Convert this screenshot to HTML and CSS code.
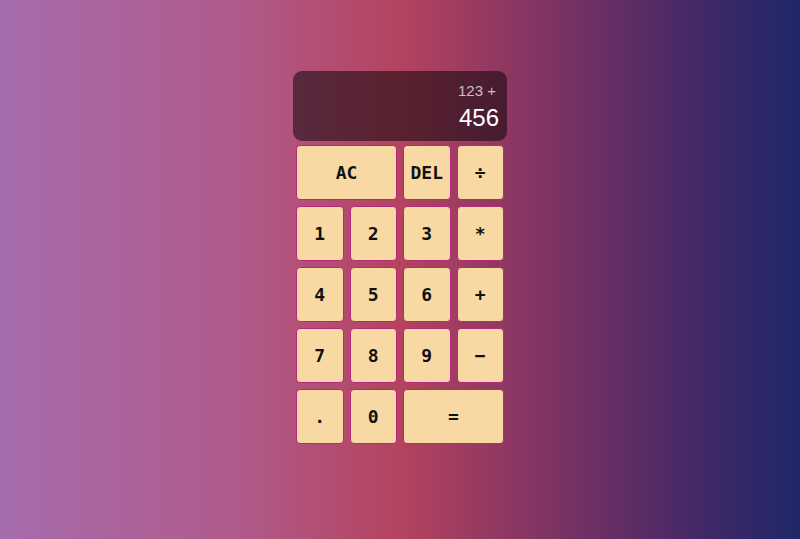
FILE: index.html
```html
<!DOCTYPE html>
<html>
<head>
<meta charset="utf-8">
<link rel="stylesheet" href="styles.css">
</head>
<body>
<div class="calc">
  <div class="display">
    <div class="prev">123 +</div>
    <div class="curr">456</div>
  </div>
  <div class="keys">
    <button class="key span2">AC</button>
    <button class="key">DEL</button>
    <button class="key">÷</button>
    <button class="key">1</button>
    <button class="key">2</button>
    <button class="key">3</button>
    <button class="key">*</button>
    <button class="key">4</button>
    <button class="key">5</button>
    <button class="key">6</button>
    <button class="key">+</button>
    <button class="key">7</button>
    <button class="key">8</button>
    <button class="key">9</button>
    <button class="key">−</button>
    <button class="key">.</button>
    <button class="key">0</button>
    <button class="key span2">=</button>
  </div>
</div>
</body>
</html>
```
FILE: styles.css
```css
html, body {
  margin: 0;
  height: 100%;
}
body {
  background: linear-gradient(to right, #a66cad 0%, #b05a8a 30%, #b4435f 50%, #7a3263 70%, #4a2966 85%, #1e2768 100%);
  font-family: "Liberation Sans", Arial, sans-serif;
  overflow: hidden;
}
.calc {
  width: 214px;
  margin: 71px auto 0;
}
.display {
  height: 70px;
  box-sizing: border-box;
  background: rgba(0, 0, 0, 0.5);
  border-radius: 9px;
  display: flex;
  flex-direction: column;
  align-items: flex-end;
  justify-content: space-around;
  padding: 8px 8px 6px;
}
.prev {
  color: rgba(255, 255, 255, 0.72);
  font-size: 15px;
  padding-right: 3px;
}
.curr {
  color: #fff;
  font-size: 24px;
}
.keys {
  display: grid;
  grid-template-columns: repeat(4, 1fr);
  grid-auto-rows: 61px;
  margin-top: 1px;
}
.key {
  margin: 3px;
  background: #f9d9a3;
  border: 1px solid #b5287a;
  border-radius: 4px;
  font-family: "DejaVu Sans Mono", monospace;
  font-weight: bold;
  font-size: 18px;
  color: #111;
  padding: 0;
}
.span2 {
  grid-column: span 2;
}
```
